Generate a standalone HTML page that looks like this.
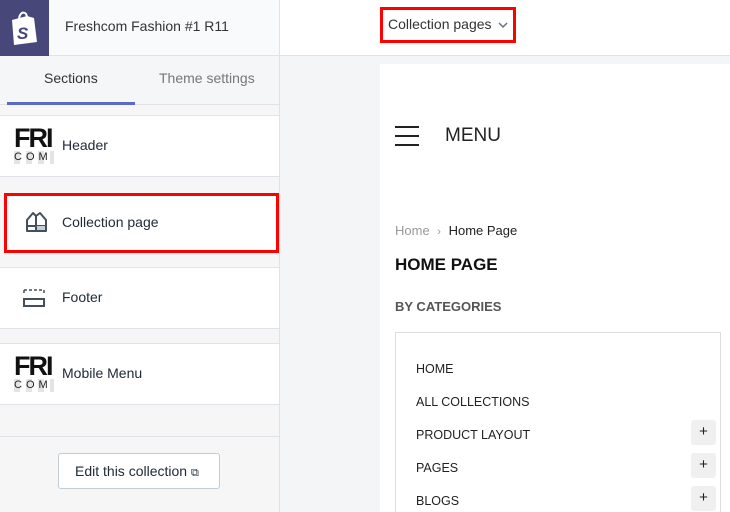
<!DOCTYPE html>
<html style="width:730px;height:512px;overflow:hidden"><head><style>
*{box-sizing:border-box;margin:0;padding:0}
body{width:730px;height:512px;overflow:hidden;font-family:"Liberation Sans",Arial,sans-serif;background:#f4f5f7;position:relative;color:#212b36}
.abs{position:absolute}
.card{position:absolute;left:0;width:279px;background:#fff;border-top:1px solid #e1e3e5;border-bottom:1px solid #dfe3e8}
.lbl{position:absolute;left:62px;font-size:14px;color:#212b36}
.fri{position:absolute;left:14px;width:40px;height:42px;overflow:hidden}
.fri b{display:block;font:900 27px/26px "Liberation Sans",Arial;letter-spacing:-2px;color:#111}
.fri i{display:block;font:normal 11px/13px "Liberation Sans";letter-spacing:4px;color:#222;font-style:normal;background:repeating-linear-gradient(90deg,#e4e4e4 0 6px,#fff 6px 12px)}
.cat{position:absolute;left:416px;font-size:12.5px;color:#222}
.plus{position:absolute;left:691px;width:25px;height:25px;background:#f0f0f0;border-radius:3px;text-align:center;font-size:15px;line-height:24px;color:#222}
</style></head><body>
<div class="abs" style="left:0;top:0;width:730px;height:56px;background:#fff;border-bottom:1px solid #dfe3e8"></div>
<div class="abs" style="left:0;top:0;width:279px;height:56px;background:#f9fafb;border-bottom:1px solid #dfe3e8"></div>
<div class="abs" style="left:0;top:0;width:49px;height:56px;background:#47477a">
<svg width="49" height="56" viewBox="0 0 49 56"><path d="M12 20 L27 16 L34 18 L37 42 L14 45 Z" fill="#fff"/><path d="M19 20 C19 11 27 10 27 18" stroke="#fff" stroke-width="2" fill="none"/><text x="17" y="39" font-family="Liberation Sans" font-weight="bold" font-style="italic" font-size="17" fill="#47477a">S</text></svg></div>
<div class="abs" style="left:65px;top:18px;font-size:14px;color:#333">Freshcom Fashion #1 R11</div>
<div class="abs" style="left:279px;top:0;width:1px;height:512px;background:#dfe3e8"></div>
<div class="abs" style="left:380px;top:7px;width:136px;height:36px;border:3px solid #f00"></div>
<div class="abs" style="left:388px;top:16px;font-size:14px;color:#333">Collection pages</div>
<svg class="abs" style="left:497px;top:21px" width="12" height="8"><path d="M2 2 L6 6 L10 2" stroke="#637381" stroke-width="1.5" fill="none"/></svg>
<div class="abs" style="left:0;top:57px;width:279px;height:48px;background:#f4f6f8;border-bottom:1px solid #dfe3e8"></div>
<div class="abs" style="left:44px;top:70px;font-size:14px;color:#333">Sections</div>
<div class="abs" style="left:159px;top:70px;font-size:14px;color:#777">Theme settings</div>
<div class="abs" style="left:7px;top:102px;width:128px;height:3px;background:#5c6ac4"></div>
<div class="abs" style="left:0;top:106px;width:279px;height:406px;background:#f6f6f7"></div>
<div class="card" style="top:115px;height:62px"><div class="fri" style="top:9px"><b>FRI</b><i>COM</i></div><div class="lbl" style="top:21px">Header</div></div>
<div class="card" style="top:193px;height:60px;border:3px solid #f00;left:4px;width:275px">
<svg class="abs" style="left:18px;top:14px" width="24" height="24" viewBox="0 0 24 24"><path d="M2 21 V10 L8 3 L11 6 L15 3 L21 10 V21 Z M11 6 V21 M2 16 H21" stroke="#454f5b" stroke-width="2" fill="none" stroke-linejoin="round"/><rect x="12" y="16" width="8" height="4" fill="#c4cdd5"/></svg>
<div class="lbl" style="left:55px;top:18px">Collection page</div></div>
<div class="card" style="top:267px;height:62px">
<svg class="abs" style="left:23px;top:20px" width="22" height="22" viewBox="0 0 22 22"><path d="M1 2 H21 M1 2V7 M21 2V7" stroke="#454f5b" stroke-width="1.5" stroke-dasharray="3 2" fill="none"/><rect x="1" y="11" width="20" height="7" stroke="#454f5b" stroke-width="2" fill="none"/></svg>
<div class="lbl" style="top:21px">Footer</div></div>
<div class="card" style="top:343px;height:62px"><div class="fri" style="top:9px"><b>FRI</b><i>COM</i></div><div class="lbl" style="top:21px">Mobile Menu</div></div>
<div class="abs" style="left:0;top:436px;width:279px;height:1px;background:#dfe3e8"></div>
<div class="abs" style="left:58px;top:453px;width:162px;height:36px;background:#fff;border:1px solid #c4cdd5;border-radius:3px;font-size:14px;line-height:34px;padding-left:16px;color:#212b36">Edit this collection <span style="font-size:11px">⧉</span></div>
<div class="abs" style="left:280px;top:57px;width:450px;height:455px;background:#f4f5f7"></div>
<div class="abs" style="left:380px;top:64px;width:350px;height:448px;background:#fff;overflow:hidden">
<div class="abs" style="left:15px;top:62px;width:24px;height:2px;background:#222;box-shadow:0 9px 0 #222,0 18px 0 #222"></div>
<div class="abs" style="left:65px;top:61px;font-size:19px;color:#222">MENU</div>
<div class="abs" style="left:15px;top:159px;font-size:13px;color:#999">Home <span style="margin:0 4px;font-size:11px">›</span> <span style="color:#222">Home Page</span></div>
<div class="abs" style="left:15px;top:191px;font-size:17px;font-weight:bold;color:#111">HOME PAGE</div>
<div class="abs" style="left:15px;top:235px;font-size:13px;font-weight:bold;color:#555">BY CATEGORIES</div>
<div class="abs" style="left:15px;top:268px;width:326px;height:200px;border:1px solid #ddd"></div>
<div class="cat" style="left:36px;top:298px">HOME</div>
<div class="cat" style="left:36px;top:331px">ALL COLLECTIONS</div>
<div class="cat" style="left:36px;top:364px">PRODUCT LAYOUT</div>
<div class="cat" style="left:36px;top:397px">PAGES</div>
<div class="cat" style="left:36px;top:430px">BLOGS</div>
<div class="plus" style="left:311px;top:356px">+</div>
<div class="plus" style="left:311px;top:389px">+</div>
<div class="plus" style="left:311px;top:422px">+</div>
</div>
</body></html>
